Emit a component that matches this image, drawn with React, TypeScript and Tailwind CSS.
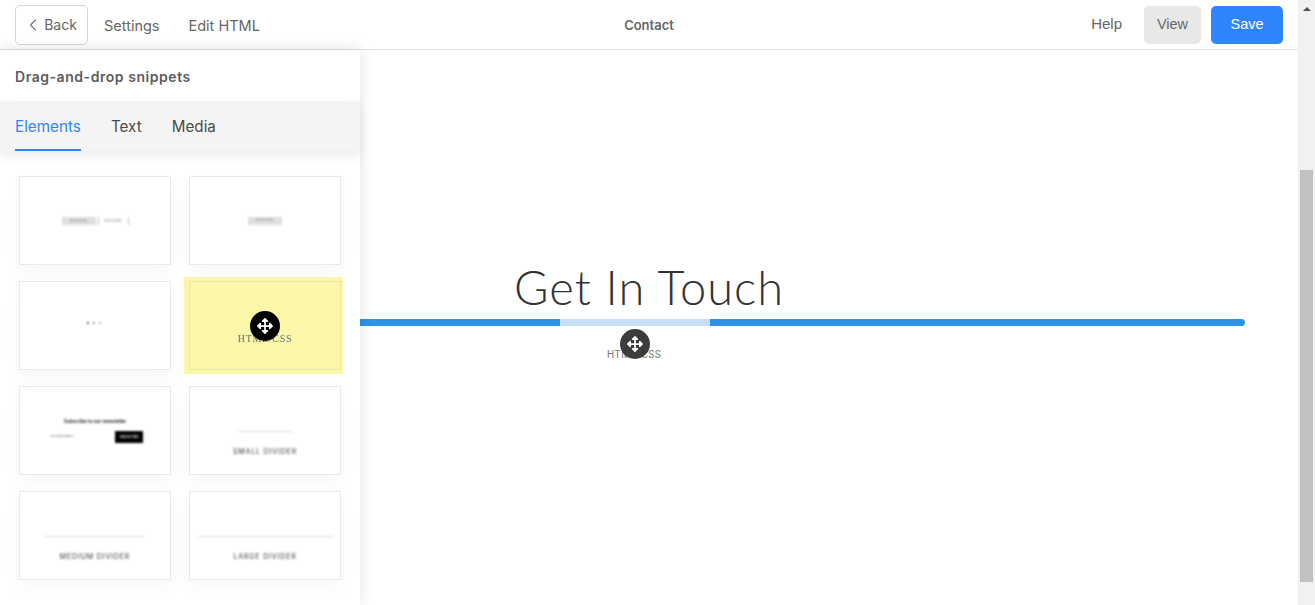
import { ChevronLeft } from 'lucide-react';
import { FaArrowsAlt } from 'react-icons/fa';
import type { ReactNode } from 'react';

function Thumb({ children }: { children?: ReactNode }) {
    return (
        <div className="relative h-[89px] border border-[#e9e9e9] bg-white shadow-[0_8px_18px_rgba(0,0,0,0.035)]">
            <div className="flex h-full w-full flex-col items-center justify-center blur-[0.8px]">{children}</div>
        </div>
    );
}

function DividerThumb({ label, width }: { label: string; width: string }) {
    return (
        <Thumb>
            <div className="flex flex-col items-center pt-[26px]">
                <div className={`h-px bg-[#d8d8d8] ${width}`}></div>
                <div className="mt-[15px] whitespace-nowrap font-['Inter'] text-[7px] leading-[9px] tracking-[0.85px] text-[#333]">{label}</div>
            </div>
        </Thumb>
    );
}

function Handle({ className }: { className: string }) {
    return (
        <div className={`absolute flex h-[30px] w-[30px] items-center justify-center rounded-full text-white ${className}`}>
            <FaArrowsAlt size={16} />
        </div>
    );
}

function Sidebar() {
    return (
        <div className="absolute top-[50px] bottom-0 left-0 z-10 w-[360px] bg-white font-['Inter'] shadow-[0_0_14px_rgba(0,0,0,0.12)]">
            <div className="flex h-[51px] items-center px-[15px] pt-[2px] text-[14px] font-semibold tracking-[0.55px] text-[#5c5c5c]">
                Drag-and-drop snippets
            </div>
            <div className="flex h-[50px] gap-[30px] bg-[#f4f4f4] px-[15px] text-[15.2px] tracking-[0.03px] text-[#4a4a4a] shadow-[0_5px_10px_rgba(0,0,0,0.08)]">
                <div className="flex items-center border-b-2 border-[#2e86f6] pt-[4px] text-[#2e86f6]">Elements</div>
                <div className="flex items-center pt-[2px]">Text</div>
                <div className="flex items-center pt-[2px]">Media</div>
            </div>
            <div className="grid grid-cols-[152px_152px] gap-x-[18px] gap-y-[16px] pt-[25px] pl-[19px]">
                <Thumb>
                    <div className="flex gap-[2px] text-[3px] leading-[8px] text-[#888]">
                        <div className="flex h-[8px] w-[34px] items-center justify-center bg-[#dfdfdf]">READ MORE</div>
                        <div className="flex h-[8px] w-[31px] items-center justify-center border-x border-[#bbb] bg-white">READ MORE</div>
                    </div>
                </Thumb>
                <Thumb>
                    <div className="flex h-[8px] w-[34px] items-center justify-center bg-[#dfdfdf] text-[3px] text-[#888]">READ MORE</div>
                </Thumb>
                <Thumb>
                    <div className="mr-[3px] mb-[6px] flex items-center gap-[4px]">
                        <div className="h-[2px] w-[2px] rounded-full bg-[#222]"></div>
                        <div className="h-[2px] w-[2px] rounded-full bg-[#777]"></div>
                        <div className="h-[2px] w-[2px] rounded-full bg-[#999]"></div>
                    </div>
                </Thumb>
                <div className="relative">
                    <div className="absolute -top-[4px] -right-[2px] -bottom-[4px] -left-[5px] bg-[#faf7a8]"></div>
                    <div className="relative flex h-[89px] items-center justify-center border border-[#e8e6a6] pt-[26px] font-['Liberation_Serif'] text-[10px] tracking-[0.7px] text-[#5f6f80] blur-[0.6px]">
                        HTML/CSS
                    </div>
                    <Handle className="top-[30px] left-[61px] bg-black" />
                </div>
                <Thumb>
                    <div className="whitespace-nowrap font-['Inter'] text-[4.7px] leading-[6px] font-semibold text-[#111]">Subscribe to our newsletter</div>
                    <div className="mt-[7px] ml-[3px] flex w-[93px] items-center justify-between">
                        <div className="text-[2.6px] text-[#555]">Your email address</div>
                        <div className="flex h-[12px] w-[28px] items-center justify-center bg-black text-[4px] text-white">Subscribe</div>
                    </div>
                </Thumb>
                <DividerThumb label="SMALL DIVIDER" width="w-[54px]" />
                <DividerThumb label="MEDIUM DIVIDER" width="w-[100px]" />
                <DividerThumb label="LARGE DIVIDER" width="w-[135px]" />
            </div>
        </div>
    );
}

function Header() {
    return (
        <div className="grid h-[50px] grid-cols-[1fr_auto_1fr] items-center border-b border-[#e2e2e2] bg-white pl-[15px] pr-[15px]">
            <div className="flex items-center font-['Inter'] text-[14.5px] text-[#666]">
                <div className="flex h-[40px] w-[73px] items-center justify-center gap-[1px] rounded-[5px] border border-[#d4d4d4] text-[14px]">
                    <ChevronLeft size={20} strokeWidth={1.4} className="ml-[-3px] text-[#777]" />
                    <span>Back</span>
                </div>
                <span className="ml-[16px] mt-[2px]">Settings</span>
                <span className="ml-[29px] mt-[2px]">Edit HTML</span>
            </div>
            <div className="mt-[2px] font-['Inter'] text-[13px] font-semibold text-[#666]">Contact</div>
            <div className="flex items-center justify-end font-['Liberation_Sans'] text-[14.5px] text-[#666]">
                <span className="text-[15px]">Help</span>
                <div className="ml-[22px] flex h-[38px] w-[57px] items-center justify-center rounded-[5px] bg-[#e8e8e8]">View</div>
                <div className="ml-[10px] flex h-[38px] w-[72px] items-center justify-center rounded-[5px] bg-[#2e86ff] text-white">Save</div>
            </div>
        </div>
    );
}

function Scrollbar() {
    return (
        <div className="flex h-full w-[17px] flex-col items-center bg-[#f1f1f1]">
            <div className="mt-[7px] h-0 w-0 border-x-[4px] border-b-[4px] border-x-transparent border-b-[#505050]"></div>
            <div className="mt-[159px] h-[412px] w-[13px] bg-[#c1c1c1]"></div>
        </div>
    );
}

export default function App() {
    return (
        <div className="relative flex h-[605px] w-[1315px] overflow-hidden bg-white">
            <div className="flex w-[1298px] flex-col">
                <Header />
                <div className="flex flex-col items-center pt-[208px]">
                    <h1 className="font-['Lato'] text-[47px] leading-[58px] font-light tracking-[1px] text-[#333]">Get In Touch</h1>
                    <div className="mt-[3px] flex h-[7px] w-[1192px] overflow-hidden rounded-full bg-[#3092e6]">
                        <div className="ml-[507px] w-[150px] bg-[#c5dff6]"></div>
                    </div>
                    <div className="relative w-[1192px]">
                        <div className="mt-[23px] ml-[554px] font-['Roboto'] text-[10px] leading-[12px] tracking-[0.6px] text-[#777]">HTML/CSS</div>
                        <Handle className="top-[3px] left-[567px] bg-[#3c3c3c]" />
                    </div>
                </div>
            </div>
            <Scrollbar />
            <Sidebar />
        </div>
    );
}
